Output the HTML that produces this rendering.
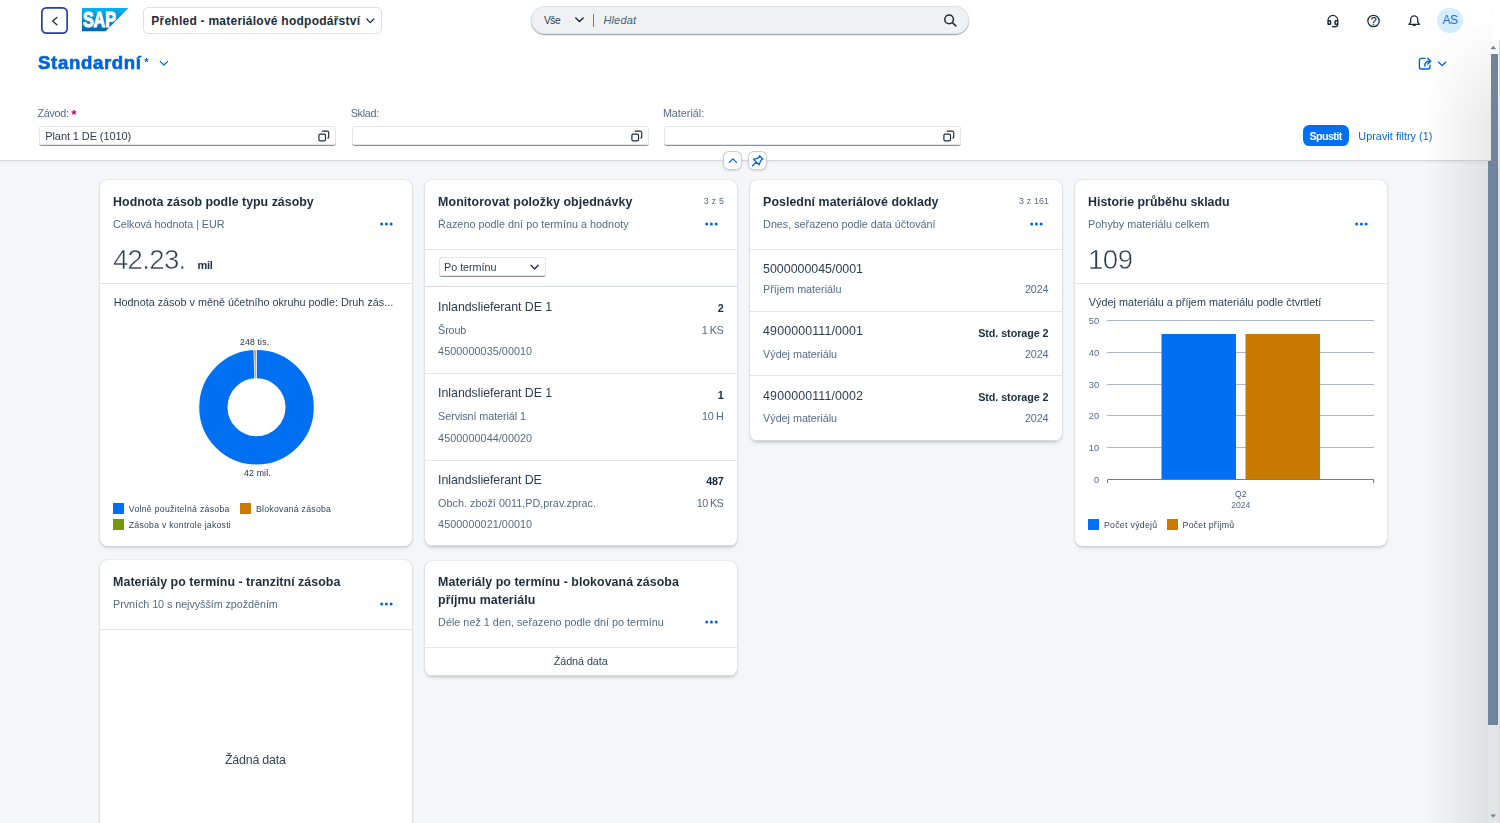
<!DOCTYPE html>
<html lang="cs"><head><meta charset="utf-8"><title>Přehled - materiálové hodpodářství</title>
<style>
*{box-sizing:border-box;margin:0;padding:0}
html,body{width:1500px;height:823px;overflow:hidden;background:#f5f6f7;font-family:"Liberation Sans",Arial,sans-serif;color:#1d2d3e}
.abs,.t{position:absolute}
.t{white-space:nowrap;line-height:1}
#shell{position:absolute;left:0;top:0;width:1500px;height:41px;background:#fff}
#head{position:absolute;left:0;top:0;width:1491px;height:161px;background:#fff;border-bottom:1px solid #d9d9d9;box-shadow:0 2px 2px rgba(85,107,130,.06)}
.card{position:absolute;width:312px;background:#fff;border-radius:7.5px;box-shadow:0 0 1.6px rgba(34,53,72,.18),0 1.6px 3px rgba(34,53,72,.18);overflow:hidden}
.hr{position:absolute;left:0;width:312px;height:1px;background:#e5e5e5}
.inp{position:absolute;height:20px;background:#fff;border-radius:3px;box-shadow:inset 0 0 0 1px #e2e5e9;border-bottom:1px solid #8193a7}
svg{position:absolute;overflow:visible}
.kpi{-webkit-text-stroke:0.55px #fff}
.gs,.card{will-change:transform}
</style></head>
<body>
<div id="shell"></div>
<header id="head">
<div class="abs" style="left:41px;top:7px;width:27px;height:27px;box-shadow:inset 0 0 0 1.7px #2140ad;border-radius:5.5px"></div>
<svg style="left:50px;top:15px" width="10" height="12" viewBox="0 0 10 12"><path d="M6.9 2.4 L2.6 6.1 L6.9 9.8" fill="none" stroke="#1d2d3e" stroke-width="1.3" stroke-linecap="round" stroke-linejoin="round"/></svg>
<svg style="left:82px;top:8px" width="47" height="24" viewBox="0 0 47 24"><defs><linearGradient id="sg" x1="0" y1="0" x2="0" y2="1"><stop offset="0" stop-color="#00b4f0"/><stop offset="1" stop-color="#0062b4"/></linearGradient></defs><polygon points="0,0 46.5,0 23.6,23.3 0,23.3" fill="url(#sg)"/><text x="0.9" y="19.2" font-family="Liberation Sans, Arial, sans-serif" font-weight="bold" font-size="21.5" fill="#fff" stroke="#fff" stroke-width="1.1" textLength="33" lengthAdjust="spacingAndGlyphs">SAP</text></svg>
<div class="abs" style="left:143px;top:7px;width:238.6px;height:26.5px;border:1px solid #dcdfe4;border-radius:5px"></div>
<span class="t" style="left:151.30px;top:15.00px;font-size:12px;color:#1d2d3e;font-weight:bold;letter-spacing:0.242px;">Přehled - materiálové hodpodářství</span>
<svg style="left:366px;top:18px" width="9" height="6" viewBox="0 0 9 6"><path d="M0.8 1 L4.3 4.6 L7.8 1" fill="none" stroke="#1d2d3e" stroke-width="1.2" stroke-linecap="round" stroke-linejoin="round"/></svg>
<div class="abs" style="left:531px;top:6px;width:438px;height:28px;border-radius:14px;background:#eff1f2;box-shadow:inset 0 0 0 1px #dfe2e6,0 1px 0.5px 0.3px #a3afbb"></div>
<span class="t" style="left:544.00px;top:16.00px;font-size:10.2px;color:#2a3b4d;letter-spacing:-0.477px;">Vše</span>
<svg style="left:575px;top:17px" width="9" height="6" viewBox="0 0 9 6"><path d="M0.8 0.9 L4.5 4.6 L8.2 0.9" fill="none" stroke="#1d2d3e" stroke-width="1.4" stroke-linecap="round" stroke-linejoin="round"/></svg>
<div class="abs" style="left:593px;top:14px;width:1px;height:13px;background:#6b7d92"></div>
<span class="t" style="left:603.40px;top:15.00px;font-size:11px;color:#475e75;font-style:italic;letter-spacing:0.161px;">Hledat</span>
<svg style="left:943px;top:13px" width="15" height="15" viewBox="0 0 15 15"><circle cx="6.1" cy="6.4" r="4.3" fill="none" stroke="#1d2d3e" stroke-width="1.5"/><path d="M9.3 9.6 L12.9 12.8" stroke="#1d2d3e" stroke-width="1.6" stroke-linecap="round"/></svg>
<svg style="left:1326px;top:14px" width="14" height="14" viewBox="0 0 14 14"><path d="M2.05 7 V6.3 A4.85 4.85 0 0 1 11.75 6.3 V7" fill="none" stroke="#1d2d3e" stroke-width="1.3"/><rect x="2.05" y="6.85" width="2.5" height="3.5" rx="0.7" fill="none" stroke="#1d2d3e" stroke-width="1.5"/><rect x="9.1" y="6.85" width="2.65" height="3.5" rx="0.7" fill="none" stroke="#1d2d3e" stroke-width="1.5"/><path d="M11.75 10.4 C11.75 12.2 10.6 12.75 8.6 12.75 H6.6" fill="none" stroke="#1d2d3e" stroke-width="1.3" stroke-linecap="round"/></svg>
<svg style="left:1366px;top:14px" width="15" height="14" viewBox="0 0 15 14"><circle cx="7.5" cy="6.95" r="5.65" fill="none" stroke="#1d2d3e" stroke-width="1.3"/><text x="7.6" y="10.5" text-anchor="middle" font-family="Liberation Sans, Arial, sans-serif" font-size="10.4" fill="#1d2d3e" stroke="#1d2d3e" stroke-width="0.25">?</text></svg>
<svg style="left:1407px;top:14px" width="14" height="14" viewBox="0 0 14 14"><path d="M1.9 10.3 L3.65 8.2 V5.4 A3.55 3.55 0 0 1 10.75 5.4 V8.2 L12.5 10.3 Z" fill="none" stroke="#1d2d3e" stroke-width="1.3" stroke-linejoin="round"/><path d="M5.1 10.8 Q7.2 13.9 9.3 10.8 Z" fill="#1d2d3e"/></svg>
<div class="abs" style="left:1437.3px;top:7.5px;width:25.4px;height:25px;border-radius:50%;background:#d1efff"></div>
<span class="t" style="left:1442.40px;top:14.00px;font-size:12px;color:#2b66d9;letter-spacing:-0.408px;">AS</span>
<div class="gs" style="position:absolute;left:0;top:0;width:1491px;height:161px">
<span class="t" style="left:38.00px;top:54.00px;font-size:18.6px;color:#0064d9;font-weight:bold;letter-spacing:0.655px;-webkit-text-stroke:0.65px #0064d9;">Standardní</span>
<span class="t" style="left:144.30px;top:57.00px;font-size:11px;color:#0064d9;font-weight:bold;">*</span>
<svg style="left:159px;top:60px" width="10" height="7" viewBox="0 0 10 7"><path d="M1.2 1.3 L4.9 5 L8.6 1.3" fill="none" stroke="#0064d9" stroke-width="1.2" stroke-linecap="round" stroke-linejoin="round"/></svg>
<svg style="left:1418px;top:57px" width="14" height="14" viewBox="0 0 14 14"><path d="M6.9 1.4 H3.4 A2 2 0 0 0 1.4 3.4 V10 A2 2 0 0 0 3.4 12 H10 A2 2 0 0 0 12 10 V8.2" fill="none" stroke="#0064d9" stroke-width="1.4" stroke-linecap="round"/><path d="M6.85 9 V8.2 C6.85 5.6 8.6 4.15 11.6 4.15" fill="none" stroke="#0064d9" stroke-width="1.5" stroke-linecap="round"/><path d="M9.7 1.2 L12.7 4.15 L9.7 6.9" fill="none" stroke="#0064d9" stroke-width="1.4" stroke-linecap="round" stroke-linejoin="round"/></svg>
<svg style="left:1437px;top:60px" width="10" height="7" viewBox="0 0 10 7"><path d="M1.7 2.2 L5.2 5.6 L8.7 2.2" fill="none" stroke="#0064d9" stroke-width="1.3" stroke-linecap="round" stroke-linejoin="round"/></svg>
<span class="t" style="left:37.40px;top:108.00px;font-size:10.8px;color:#556b82;letter-spacing:-0.281px;">Závod:</span>
<span class="t" style="left:71.20px;top:108.00px;font-size:13.5px;color:#ba066c;font-weight:bold;">*</span>
<span class="t" style="left:350.70px;top:108.00px;font-size:10.8px;color:#556b82;letter-spacing:-0.282px;">Sklad:</span>
<span class="t" style="left:662.90px;top:108.00px;font-size:10.8px;color:#556b82;letter-spacing:-0.013px;">Materiál:</span>
<div class="inp" style="left:39px;top:126px;width:297px"></div>
<svg style="left:317.5px;top:129.5px" width="12" height="12" viewBox="0 0 12 12"><rect x="0.9" y="4.1" width="6.6" height="6.7" rx="1.4" fill="none" stroke="#1d2d3e" stroke-width="1.2"/><path d="M4.2 1.2 H9.3 A1.4 1.4 0 0 1 10.7 2.6 V7.2 A0.9 0.9 0 0 1 9.8 8.1" fill="none" stroke="#1d2d3e" stroke-width="1.2" stroke-linecap="round"/></svg>
<div class="inp" style="left:352px;top:126px;width:297px"></div>
<svg style="left:630.5px;top:129.5px" width="12" height="12" viewBox="0 0 12 12"><rect x="0.9" y="4.1" width="6.6" height="6.7" rx="1.4" fill="none" stroke="#1d2d3e" stroke-width="1.2"/><path d="M4.2 1.2 H9.3 A1.4 1.4 0 0 1 10.7 2.6 V7.2 A0.9 0.9 0 0 1 9.8 8.1" fill="none" stroke="#1d2d3e" stroke-width="1.2" stroke-linecap="round"/></svg>
<div class="inp" style="left:664px;top:126px;width:297px"></div>
<svg style="left:942.5px;top:129.5px" width="12" height="12" viewBox="0 0 12 12"><rect x="0.9" y="4.1" width="6.6" height="6.7" rx="1.4" fill="none" stroke="#1d2d3e" stroke-width="1.2"/><path d="M4.2 1.2 H9.3 A1.4 1.4 0 0 1 10.7 2.6 V7.2 A0.9 0.9 0 0 1 9.8 8.1" fill="none" stroke="#1d2d3e" stroke-width="1.2" stroke-linecap="round"/></svg>
<span class="t" style="left:45.30px;top:131.00px;font-size:11px;color:#2d3d4e;letter-spacing:-0.102px;">Plant 1 DE (1010)</span>
<div class="abs" style="left:1303px;top:125.3px;width:45.7px;height:20.8px;border-radius:6.4px;background:#0070f2"></div>
<span class="t" style="left:1309.40px;top:131.00px;font-size:10.8px;color:#fff;font-weight:bold;letter-spacing:-0.615px;">Spustit</span>
<span class="t" style="left:1358.30px;top:131.00px;font-size:10.8px;color:#0064d9;letter-spacing:0.054px;">Upravit filtry (1)</span>
</div>
</header>
<main>
<div class="abs" style="left:723.4px;top:151.4px;width:18.5px;height:18.6px;border-radius:6px;background:#fff;box-shadow:inset 0 0 0 1px #c8cdd4,0 1px 2px rgba(34,53,72,.16)"></div>
<div class="abs" style="left:748.4px;top:151.4px;width:18.5px;height:18.6px;border-radius:6px;background:#fff;box-shadow:inset 0 0 0 1px #c8cdd4,0 1px 2px rgba(34,53,72,.16)"></div>
<svg style="left:728px;top:157px" width="10" height="7" viewBox="0 0 10 7"><path d="M1.3 5.4 L4.9 1.9 L8.5 5.4" fill="none" stroke="#0064d9" stroke-width="1.3" stroke-linecap="round" stroke-linejoin="round"/></svg>
<svg style="left:751px;top:154px" width="14" height="14" viewBox="0 0 14 14"><path d="M8.5 1.7 L12 5.1 M9.1 2.4 L6.3 4.4 L2.5 5.4 L8.2 10.75 L9.4 7.3 L11.3 4.5 M5.3 8.2 L1.4 11.7" fill="none" stroke="#0064d9" stroke-width="1.3" stroke-linecap="round" stroke-linejoin="round"/></svg>
<section class="card" style="left:100px;top:180px;height:366px">
<span class="t" style="left:13.10px;top:16.00px;font-size:12.4px;color:#1d2d3e;font-weight:bold;letter-spacing:0.009px;">Hodnota zásob podle typu zásoby</span>
<span class="t" style="left:13.10px;top:39.00px;font-size:10.8px;color:#556b82;letter-spacing:-0.062px;">Celková hodnota | EUR</span>
<svg style="left:279.6px;top:42.1px" width="14" height="4" viewBox="0 0 14 4"><circle cx="1.7" cy="2.1" r="1.5" fill="#0064d9"/><circle cx="6.4" cy="2.1" r="1.5" fill="#0064d9"/><circle cx="11.1" cy="2.1" r="1.5" fill="#0064d9"/></svg>
<span class="t kpi" style="left:12.90px;top:66.00px;font-size:27.6px;color:#2d3d4e;letter-spacing:-0.664px;">42.23.</span>
<span class="t" style="left:97.40px;top:80.00px;font-size:11px;color:#1d2d3e;font-weight:bold;letter-spacing:-0.247px;">mil</span>
<div class="hr" style="top:103px"></div>
<span class="t" style="left:13.80px;top:117.00px;font-size:10.8px;color:#2d3d4e;letter-spacing:0.006px;">Hodnota zásob v měně účetního okruhu podle: Druh zás...</span>
<svg style="left:0;top:0" width="312" height="366" viewBox="0 0 312 366">
<circle cx="156.5" cy="227.3" r="43.15" fill="none" stroke="#0070f2" stroke-width="28.3"/>
<path d="M153.5 169 L156.8 169 L156.8 199.5 L154.4 199.5 Z" fill="#fff"/>
<path d="M154.1 170.2 L155.9 170.2 L155.8 198.6 L155.1 198.6 Z" fill="#d9952e"/>
<text x="140" y="164.5" textLength="29.1" lengthAdjust="spacing" font-family="Liberation Sans, Arial, sans-serif" font-size="8.7" fill="#1d2d3e">248 tis.</text>
<text x="144.1" y="295.8" textLength="26.6" lengthAdjust="spacing" font-family="Liberation Sans, Arial, sans-serif" font-size="8.7" fill="#1d2d3e">42 mil.</text>
</svg>
<div class="abs" style="left:13.1px;top:323px;width:10.9px;height:10.5px;background:#0070f2"></div>
<span class="t" style="left:28.80px;top:325.00px;font-size:8.7px;color:#32465a;letter-spacing:0.291px;">Volně použitelná zásoba</span>
<div class="abs" style="left:140.3px;top:323px;width:10.9px;height:10.5px;background:#c87b00"></div>
<span class="t" style="left:156.00px;top:325.00px;font-size:8.7px;color:#32465a;letter-spacing:0.260px;">Blokovaná zásoba</span>
<div class="abs" style="left:13.1px;top:339.3px;width:10.9px;height:10.5px;background:#75980b"></div>
<span class="t" style="left:28.80px;top:341.00px;font-size:8.7px;color:#32465a;letter-spacing:0.246px;">Zásoba v kontrole jakosti</span>
</section>
<section class="card" style="left:425px;top:180px;height:366px">
<span class="t" style="left:13.10px;top:16.00px;font-size:12.4px;color:#1d2d3e;font-weight:bold;letter-spacing:0.073px;">Monitorovat položky objednávky</span>
<span class="t" style="left:13.10px;top:39.00px;font-size:10.8px;color:#556b82;letter-spacing:0.023px;">Řazeno podle dní po termínu a hodnoty</span>
<svg style="left:279.6px;top:42.1px" width="14" height="4" viewBox="0 0 14 4"><circle cx="1.7" cy="2.1" r="1.5" fill="#0064d9"/><circle cx="6.4" cy="2.1" r="1.5" fill="#0064d9"/><circle cx="11.1" cy="2.1" r="1.5" fill="#0064d9"/></svg>
<span class="t" style="left:278.70px;top:17.00px;font-size:8.8px;color:#556b82;letter-spacing:0.307px;">3 z 5</span>
<div class="hr" style="top:69px"></div>
<div class="inp" style="left:13.6px;top:77.3px;width:107.8px;height:19.8px"></div>
<span class="t" style="left:19.10px;top:82.00px;font-size:10.8px;color:#2d3d4e;letter-spacing:-0.057px;">Po termínu</span>
<svg style="left:104.8px;top:83.8px" width="10" height="7" viewBox="0 0 10 7"><path d="M1 1.2 L4.6 5 L8.2 1.2" fill="none" stroke="#1d2d3e" stroke-width="1.3" stroke-linecap="round" stroke-linejoin="round"/></svg>
<div class="hr" style="top:105.5px;height:1.6px;background:#d3d9df"></div>
<span class="t" style="left:13.10px;top:121.00px;font-size:12.4px;color:#2d3d4e;letter-spacing:-0.046px;">Inlandslieferant DE 1</span>
<span class="t" style="left:292.80px;top:123.00px;font-size:10.8px;color:#1d2d3e;font-weight:bold;">2</span>
<span class="t" style="left:13.10px;top:145.00px;font-size:10.8px;color:#556b82;letter-spacing:-0.153px;">Šroub</span>
<span class="t" style="left:276.80px;top:145.00px;font-size:10.8px;color:#556b82;letter-spacing:-0.469px;">1 KS</span>
<span class="t" style="left:13.10px;top:166.00px;font-size:10.8px;color:#556b82;letter-spacing:0.062px;">4500000035/00010</span>
<div class="hr" style="top:193.0px"></div>
<span class="t" style="left:13.10px;top:207.00px;font-size:12.4px;color:#2d3d4e;letter-spacing:-0.046px;">Inlandslieferant DE 1</span>
<span class="t" style="left:292.80px;top:210.00px;font-size:10.8px;color:#1d2d3e;font-weight:bold;">1</span>
<span class="t" style="left:13.10px;top:231.00px;font-size:10.8px;color:#556b82;letter-spacing:-0.084px;">Servisní materiál 1</span>
<span class="t" style="left:277.00px;top:231.00px;font-size:10.8px;color:#556b82;letter-spacing:-0.335px;">10 H</span>
<span class="t" style="left:13.10px;top:253.00px;font-size:10.8px;color:#556b82;letter-spacing:0.062px;">4500000044/00020</span>
<div class="hr" style="top:279.5px"></div>
<span class="t" style="left:13.10px;top:294.00px;font-size:12.4px;color:#2d3d4e;letter-spacing:-0.050px;">Inlandslieferant DE</span>
<span class="t" style="left:281.30px;top:296.00px;font-size:10.8px;color:#1d2d3e;font-weight:bold;letter-spacing:-0.257px;">487</span>
<span class="t" style="left:13.10px;top:318.00px;font-size:10.8px;color:#556b82;letter-spacing:0.016px;">Obch. zboží 0011,PD,prav.zprac.</span>
<span class="t" style="left:271.80px;top:318.00px;font-size:10.8px;color:#556b82;letter-spacing:-0.603px;">10 KS</span>
<span class="t" style="left:13.10px;top:339.00px;font-size:10.8px;color:#556b82;letter-spacing:0.062px;">4500000021/00010</span>
<div class="hr" style="top:365px;background:#d5dae0"></div>
</section>
<section class="card" style="left:750px;top:180px;height:260.5px">
<span class="t" style="left:13.10px;top:16.00px;font-size:12.4px;color:#1d2d3e;font-weight:bold;letter-spacing:0.044px;">Poslední materiálové doklady</span>
<span class="t" style="left:13.10px;top:39.00px;font-size:10.8px;color:#556b82;letter-spacing:-0.014px;">Dnes, seřazeno podle data účtování</span>
<svg style="left:279.6px;top:42.1px" width="14" height="4" viewBox="0 0 14 4"><circle cx="1.7" cy="2.1" r="1.5" fill="#0064d9"/><circle cx="6.4" cy="2.1" r="1.5" fill="#0064d9"/><circle cx="11.1" cy="2.1" r="1.5" fill="#0064d9"/></svg>
<span class="t" style="left:268.90px;top:17.00px;font-size:8.8px;color:#556b82;letter-spacing:0.207px;">3 z 161</span>
<div class="hr" style="top:69px"></div>
<span class="t" style="left:13.10px;top:83.00px;font-size:12.4px;color:#2d3d4e;letter-spacing:-0.001px;">5000000045/0001</span>
<span class="t" style="left:13.10px;top:104.00px;font-size:10.8px;color:#556b82;letter-spacing:-0.020px;">Příjem materiálu</span>
<span class="t" style="left:274.90px;top:104.00px;font-size:10.8px;color:#556b82;letter-spacing:-0.106px;">2024</span>
<span class="t" style="left:13.10px;top:145.00px;font-size:12.4px;color:#2d3d4e;letter-spacing:0.130px;">4900000111/0001</span>
<span class="t" style="left:228.20px;top:148.00px;font-size:10.8px;color:#1d2d3e;font-weight:bold;letter-spacing:-0.077px;">Std. storage 2</span>
<span class="t" style="left:13.10px;top:169.00px;font-size:10.8px;color:#556b82;letter-spacing:-0.030px;">Výdej materiálu</span>
<span class="t" style="left:274.90px;top:169.00px;font-size:10.8px;color:#556b82;letter-spacing:-0.106px;">2024</span>
<span class="t" style="left:13.10px;top:210.00px;font-size:12.4px;color:#2d3d4e;letter-spacing:0.130px;">4900000111/0002</span>
<span class="t" style="left:228.20px;top:212.00px;font-size:10.8px;color:#1d2d3e;font-weight:bold;letter-spacing:-0.077px;">Std. storage 2</span>
<span class="t" style="left:13.10px;top:233.00px;font-size:10.8px;color:#556b82;letter-spacing:-0.030px;">Výdej materiálu</span>
<span class="t" style="left:274.90px;top:233.00px;font-size:10.8px;color:#556b82;letter-spacing:-0.106px;">2024</span>
<div class="hr" style="top:130.5px"></div>
<div class="hr" style="top:195px"></div>
<div class="hr" style="top:259.5px;background:#d5dae0"></div>
</section>
<section class="card" style="left:1075px;top:180px;height:366px">
<span class="t" style="left:13.10px;top:16.00px;font-size:12.4px;color:#1d2d3e;font-weight:bold;letter-spacing:-0.015px;">Historie průběhu skladu</span>
<span class="t" style="left:13.10px;top:39.00px;font-size:10.8px;color:#556b82;letter-spacing:0.027px;">Pohyby materiálu celkem</span>
<svg style="left:279.6px;top:42.1px" width="14" height="4" viewBox="0 0 14 4"><circle cx="1.7" cy="2.1" r="1.5" fill="#0064d9"/><circle cx="6.4" cy="2.1" r="1.5" fill="#0064d9"/><circle cx="11.1" cy="2.1" r="1.5" fill="#0064d9"/></svg>
<span class="t kpi" style="left:12.90px;top:66.00px;font-size:27.6px;color:#2d3d4e;letter-spacing:-0.419px;">109</span>
<div class="hr" style="top:103px"></div>
<span class="t" style="left:13.80px;top:117.00px;font-size:10.8px;color:#2d3d4e;letter-spacing:0.030px;">Výdej materiálu a příjem materiálu podle čtvrtletí</span>
<svg style="left:0;top:0" width="312" height="366" viewBox="0 0 312 366" font-family="Liberation Sans, Arial, sans-serif"><path d="M32 140.5 H299" stroke="#adb9c6" stroke-width="1"/><text x="24.1" y="144.4" text-anchor="end" font-size="9.3" fill="#556b82">50</text><path d="M32 172.5 H299" stroke="#adb9c6" stroke-width="1"/><text x="24.1" y="176.4" text-anchor="end" font-size="9.3" fill="#556b82">40</text><path d="M32 204.5 H299" stroke="#adb9c6" stroke-width="1"/><text x="24.1" y="208.4" text-anchor="end" font-size="9.3" fill="#556b82">30</text><path d="M32 235.5 H299" stroke="#adb9c6" stroke-width="1"/><text x="24.1" y="239.4" text-anchor="end" font-size="9.3" fill="#556b82">20</text><path d="M32 267.5 H299" stroke="#adb9c6" stroke-width="1"/><text x="24.1" y="271.4" text-anchor="end" font-size="9.3" fill="#556b82">10</text><text x="24.1" y="303.4" text-anchor="end" font-size="9.3" fill="#556b82">0</text><rect x="86.5" y="154" width="74.5" height="145.5" fill="#0070f2"/><rect x="170.5" y="154" width="74.5" height="145.5" fill="#c87b00"/><path d="M32.5 303 V299.5 H298.5 V303" fill="none" stroke="#6a7d92" stroke-width="1"/><text x="165.7" y="317.2" text-anchor="middle" font-size="8.6" fill="#475c73">Q2</text><text x="165.7" y="328.3" text-anchor="middle" font-size="8.6" fill="#556b82">2024</text></svg>
<div class="abs" style="left:13.1px;top:339.1px;width:11.1px;height:11.1px;background:#0070f2"></div>
<span class="t" style="left:28.90px;top:341.00px;font-size:8.7px;color:#32465a;letter-spacing:0.324px;">Počet výdejů</span>
<div class="abs" style="left:91.6px;top:339.1px;width:11.1px;height:11.1px;background:#c87b00"></div>
<span class="t" style="left:107.60px;top:341.00px;font-size:8.7px;color:#32465a;letter-spacing:0.258px;">Počet příjmů</span>
</section>
<section class="card" style="left:100px;top:560px;height:300px">
<span class="t" style="left:13.10px;top:16.00px;font-size:12.4px;color:#1d2d3e;font-weight:bold;letter-spacing:0.036px;">Materiály po termínu - tranzitní zásoba</span>
<span class="t" style="left:13.10px;top:39.00px;font-size:10.8px;color:#556b82;letter-spacing:-0.068px;">Prvních 10 s nejvyšším zpožděním</span>
<svg style="left:279.6px;top:42.1px" width="14" height="4" viewBox="0 0 14 4"><circle cx="1.7" cy="2.1" r="1.5" fill="#0064d9"/><circle cx="6.4" cy="2.1" r="1.5" fill="#0064d9"/><circle cx="11.1" cy="2.1" r="1.5" fill="#0064d9"/></svg>
<div class="hr" style="top:68.6px"></div>
<span class="t" style="left:125.00px;top:194.00px;font-size:12.4px;color:#32465a;letter-spacing:-0.210px;">Žádná data</span>
</section>
<section class="card" style="left:425px;top:561px;height:115px">
<span class="t" style="left:13.10px;top:15.00px;font-size:12.4px;color:#1d2d3e;font-weight:bold;letter-spacing:0.047px;">Materiály po termínu - blokovaná zásoba</span>
<span class="t" style="left:13.10px;top:33.00px;font-size:12.4px;color:#1d2d3e;font-weight:bold;letter-spacing:0.047px;">příjmu materiálu</span>
<span class="t" style="left:13.10px;top:56.00px;font-size:10.8px;color:#556b82;letter-spacing:0.014px;">Déle než 1 den, seřazeno podle dní po termínu</span>
<svg style="left:279.6px;top:59.2px" width="14" height="4" viewBox="0 0 14 4"><circle cx="1.7" cy="2.1" r="1.5" fill="#0064d9"/><circle cx="6.4" cy="2.1" r="1.5" fill="#0064d9"/><circle cx="11.1" cy="2.1" r="1.5" fill="#0064d9"/></svg>
<div class="hr" style="top:86px"></div>
<span class="t" style="left:128.75px;top:95.00px;font-size:10.8px;color:#32465a;letter-spacing:-0.081px;">Žádná data</span>
<div class="hr" style="top:114px;background:#d5dae0"></div>
</section>
</main>
<div class="abs" style="left:1425px;top:0;width:66px;height:823px;background:linear-gradient(to right,rgba(0,0,0,0),rgba(0,0,0,.088));-webkit-mask-image:linear-gradient(to bottom,rgba(0,0,0,0) 15px,#000 120px);mask-image:linear-gradient(to bottom,rgba(0,0,0,0) 15px,#000 120px);pointer-events:none"></div>
<div class="abs" style="left:1488px;top:161px;width:12px;height:662px;background:#e3e4e6"></div>
<div class="abs" style="left:1491px;top:40px;width:9px;height:121px;background:linear-gradient(to bottom,#fafafa,#ebebeb)"></div>
<div class="abs" style="left:1499px;top:40px;width:1px;height:783px;background:#dcdcdc"></div>
<div class="abs" style="left:1491px;top:54px;width:7px;height:107px;background:#70849d"></div>
<div class="abs" style="left:1488px;top:161px;width:10px;height:564px;background:#70849d"></div>
<svg style="left:1490px;top:45px" width="7" height="5" viewBox="0 0 7 5"><path d="M0.4 4.2 L3.3 0.8 L6.2 4.2 Z" fill="#70849d"/></svg>
<svg style="left:1490px;top:814px" width="7" height="5" viewBox="0 0 7 5"><path d="M0.2 0.4 L3.1 3.8 L6 0.4 Z" fill="#70849d"/></svg>
</body></html>
